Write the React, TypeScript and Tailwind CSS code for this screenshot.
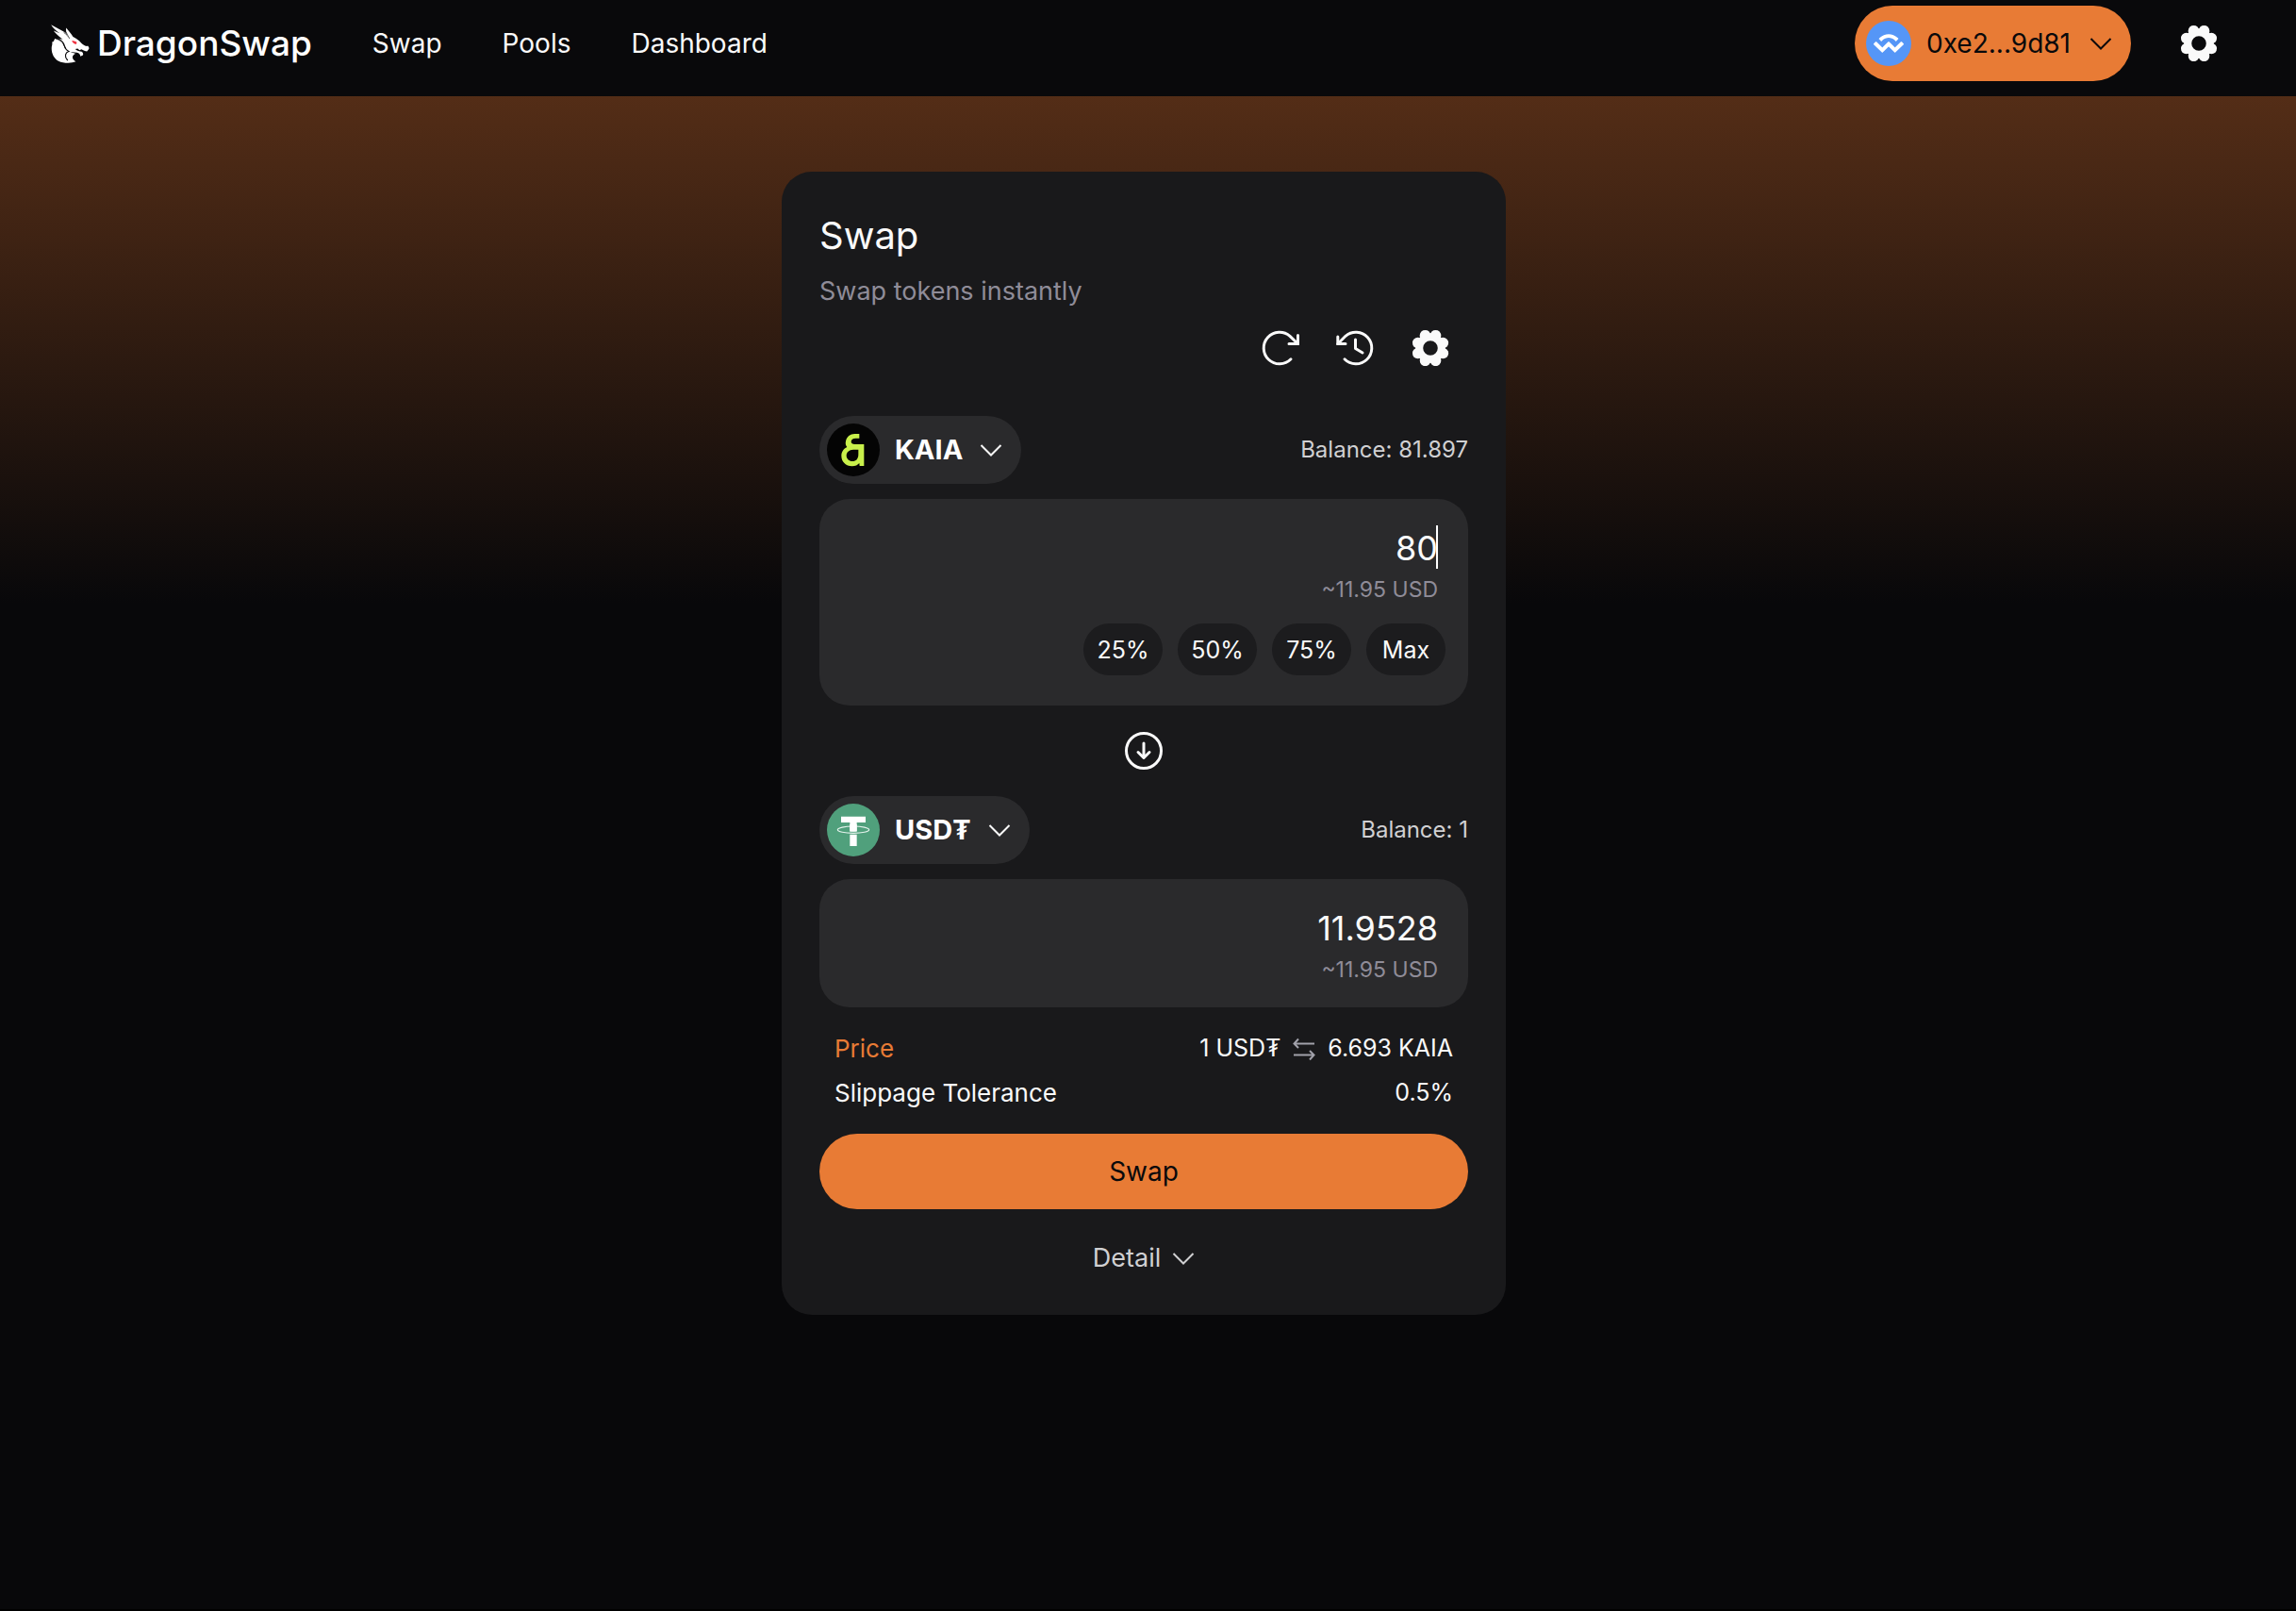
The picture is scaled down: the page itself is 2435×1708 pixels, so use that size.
import React, { useState } from "react";

function Chevron({ className }: { className: string }) {
  return (
    <svg viewBox="0 0 24 24" className={className} fill="none" stroke="currentColor" strokeWidth="2" aria-hidden="true">
      <path d="M1.5 7 L12 17.5 L22.5 7" />
    </svg>
  );
}

function DragonMark() {
  return (
    <svg viewBox="42 40 124 125" className="size-[41px]" aria-hidden="true">
      <g fill="#fff">
        <path d="M42 41 L80 61 C90 66 96 72 100 80 L91 64 C90 60 90 56 91 51 C98 60 106 68 113 80 C122 84 132 91 140 100 C146 106 152 109 159 110 C160 106 164 112 165 117 C163 121 161 124 158 127 C153 127 146 122 140 120 L134 123 L128 118 L120 119 C126 126 134 126 141 128 C145 131 147 135 145 139 L137 143 C136 136 132 132 126 131 C116 129 106 130 99 127 C92 123 88 114 84 104 C78 97 68 92 62 84 L80 88 C66 78 55 68 50 60 L70 68 C58 60 48 52 42 41Z" />
        <path d="M54 86 C66 90 78 96 82 106 C86 116 92 120 98 126 C112 131 116 132 122 134 C108 140 108 152 122 160 C108 166 82 166 66 158 C50 149 42 130 44 112 C45 108 47 103 45 96 C49 98 51 94 54 86Z" />
      </g>
      <path d="M62 84 C74 90 83 98 85 108 C87 117 92 123 99 127 C88 130 84 144 95 155" fill="none" stroke="#09090b" strokeWidth="3.5" strokeLinecap="round" />
      <path d="M84 66 C92 72 98 78 101 84" fill="none" stroke="#09090b" strokeWidth="2.5" strokeLinecap="round" />
      <path d="M109 93 C114 92 120 94 125 97 L124 103 C118 103 113 101 109 93Z" fill="#ef3340" />
    </svg>
  );
}

const LOBES = [22.5, 67.5, 112.5, 157.5, 202.5, 247.5, 292.5, 337.5];

function Gear() {
  return (
    <svg viewBox="0 0 48 48" className="size-12" aria-hidden="true">
      <circle cx="24" cy="24" r="11.8" fill="none" stroke="#fafafa" strokeWidth="8" />
      {LOBES.map((a) => (
        <circle key={a} cx="24" cy="9.6" r="5.8" fill="#fafafa" transform={`rotate(${a} 24 24)`} />
      ))}
    </svg>
  );
}

function RefreshGlyph() {
  return (
    <svg viewBox="0 0 48 48" className="size-12" fill="none" stroke="currentColor" strokeWidth="3" strokeLinecap="round" aria-hidden="true">
      <path d="M36 35.8 A16.8 16.8 0 1 1 35 11.3 L43.5 19.5" />
      <path d="M43.5 10.5 V19.5 H34" strokeLinejoin="miter" />
    </svg>
  );
}

function HistoryGlyph() {
  return (
    <svg viewBox="0 0 48 48" className="size-12" fill="none" stroke="currentColor" strokeWidth="3" strokeLinecap="round" aria-hidden="true">
      <path d="M13 35.8 A16.8 16.8 0 1 0 14 11.3 L5.8 19.5" />
      <path d="M5.8 12 V19.5 H14" strokeLinejoin="miter" />
      <path d="M24.5 15 V24.5 L32 29" strokeLinejoin="round" />
    </svg>
  );
}

function WalletMark() {
  return (
    <span className="flex size-12 items-center justify-center rounded-full bg-[#5596f7]">
      <svg viewBox="0 0 300 185" className="h-5 w-8" fill="#fff" aria-hidden="true">
        <path d="M61.439 36.256c48.91-47.888 128.212-47.888 177.123 0l5.886 5.764a6.041 6.041 0 0 1 0 8.67l-20.136 19.716a3.179 3.179 0 0 1-4.428 0l-8.101-7.931c-34.122-33.408-89.444-33.408-123.566 0l-8.675 8.494a3.179 3.179 0 0 1-4.428 0L54.978 51.253a6.041 6.041 0 0 1 0-8.67l6.46-6.327ZM280.206 77.03l17.922 17.547a6.041 6.041 0 0 1 0 8.67l-80.81 79.122c-2.446 2.394-6.41 2.394-8.856 0l-57.354-56.155a1.59 1.59 0 0 0-2.214 0L91.54 182.37c-2.446 2.394-6.411 2.394-8.857 0L1.872 103.247a6.041 6.041 0 0 1 0-8.671l17.922-17.547c2.445-2.394 6.41-2.394 8.856 0l57.355 56.155a1.59 1.59 0 0 0 2.214 0L145.57 77.03c2.446-2.394 6.41-2.395 8.856 0l57.355 56.155a1.59 1.59 0 0 0 2.214 0l57.355-56.154c2.445-2.394 6.41-2.394 8.856 0Z" />
      </svg>
    </span>
  );
}

function KaiaMark() {
  return (
    <svg viewBox="0 0 168 168" className="size-14" aria-hidden="true">
      <circle cx="84" cy="84" r="84" fill="#040404" />
      <path
        fill="#c8f04b"
        fillRule="evenodd"
        d="M46 103 C46 90 53 80 64 75 C60 70 58 64 60 56 C63 42 74 33 88 33 H103 V47 H92 C82 47 77 52 77 58 C77 64 82 66 88 66 H118 V135 H104 L103 126 C98 132 90 136 80 136 C60 136 46 122 46 103Z M100 83 H84 C70 83 62 92 62 102 C62 112 70 120 81 120 C93 120 100 112 100 98Z"
      />
    </svg>
  );
}

function TetherMark() {
  return (
    <svg viewBox="0 0 168 168" className="size-14" aria-hidden="true">
      <circle cx="84" cy="84" r="84" fill="#50a07c" />
      <path d="M45 41 H123 V60 H95 V135 H73 V60 H45Z" fill="#fff" />
      <path d="M34 83 A50 11 0 0 0 134 83" fill="none" stroke="#50a07c" strokeWidth="9" />
      <ellipse cx="84" cy="83" rx="50" ry="11" fill="none" stroke="#e4f2ec" strokeWidth="3.5" />
      <path d="M73 66 H95 V88 H73Z" fill="#fff" />
    </svg>
  );
}

function TokenRow({ icon, symbol, balance }: { icon: React.ReactNode; symbol: string; balance: string }) {
  return (
    <div className="flex items-center justify-between">
      <button type="button" className="flex h-[72px] items-center rounded-full bg-[#2a2a2c] pr-5 pl-2">
        {icon}
        <span className="ml-4 text-[29px] leading-10 font-bold text-white">{symbol}</span>
        <Chevron className="ml-[18px] size-6" />
      </button>
      <span className="text-[24px] leading-8 text-[#d0d0d2]">Balance: {balance}</span>
    </div>
  );
}

function AmountField({
  id,
  label,
  value,
  onChange,
  caret,
}: {
  id: string;
  label: string;
  value: string;
  onChange?: (v: string) => void;
  caret?: boolean;
}) {
  return (
    <div className="px-2">
      <div className="relative">
        <input
          id={id}
          aria-label={label}
          value={value}
          readOnly={!onChange}
          onChange={(e) => onChange?.(e.target.value)}
          className="block h-12 w-full bg-transparent text-right text-[36px] leading-[48px] text-[#fafafa] outline-none"
        />
        {caret && <span className="absolute top-0 right-0 h-[46px] w-0.5 bg-white" />}
      </div>
      <p className="mt-1 text-right text-[23px] leading-8 text-[#8f8c98]">~11.95 USD</p>
    </div>
  );
}

export default function App() {
  const [amount, setAmount] = useState("80");
  return (
    <div className="flex min-h-screen flex-col border-b-2 border-black bg-[#08080a] bg-[linear-gradient(to_bottom,#623419_0px,#08080a_640px)] font-['Inter',sans-serif] text-[#fafafa]">
      <header className="flex items-center justify-between bg-[#09090b] pt-1.5 pr-[79px] pb-4 pl-[54px]">
        <div className="flex items-center gap-16">
          <a href="#" className="flex items-center gap-2 text-[37px] leading-[48px] font-medium text-white">
            <DragonMark />
            DragonSwap
          </a>
          <nav className="flex items-center gap-16 text-[28px] leading-10">
            <a href="#swap">Swap</a>
            <a href="#pools">Pools</a>
            <a href="#dashboard">Dashboard</a>
          </nav>
        </div>
        <div className="flex items-center gap-12">
          <button type="button" className="flex h-20 items-center rounded-full bg-[#e87b35] pr-5 pl-3 text-[28px] leading-10 text-[#09090b]">
            <WalletMark />
            <span className="ml-4">0xe2...9d81</span>
            <Chevron className="ml-5 size-6" />
          </button>
          <button type="button" aria-label="Settings">
            <Gear />
          </button>
        </div>
      </header>

      <main className="flex justify-center pt-20 pr-[9px]">
        <section className="w-full max-w-[768px] rounded-[32px] bg-[#19191b] p-10">
          <h1 className="text-[40px] leading-[55px]">Swap</h1>
          <p className="mt-2 text-[27px] leading-12 text-[#8f8c98]">Swap tokens instantly</p>
          <div className="mt-3 flex justify-end gap-8 pr-4">
            <button type="button" aria-label="Refresh">
              <RefreshGlyph />
            </button>
            <button type="button" aria-label="History">
              <HistoryGlyph />
            </button>
            <button type="button" aria-label="Swap settings">
              <Gear />
            </button>
          </div>

          <div className="mt-12">
            <TokenRow icon={<KaiaMark />} symbol="KAIA" balance="81.897" />
          </div>
          <div className="mt-4 rounded-[32px] bg-[#2a2a2c] px-6 pt-7 pb-8">
            <AmountField id="pay" label="Amount to pay" value={amount} onChange={setAmount} caret />
            <div className="mt-5 flex justify-end gap-4">
              {["25%", "50%", "75%", "Max"].map((t) => (
                <button key={t} type="button" className="h-[55px] w-[84px] rounded-full bg-[#1c1c1e] text-[25px] leading-8">
                  {t}
                </button>
              ))}
            </div>
          </div>

          <div className="flex justify-center py-6">
            <button type="button" aria-label="Switch tokens">
              <svg viewBox="0 0 48 48" className="size-12" fill="none" stroke="currentColor" strokeWidth="3" strokeLinecap="round" strokeLinejoin="round" aria-hidden="true">
                <circle cx="24" cy="24" r="18.5" />
                <path d="M24 16 V31 M18 25.5 L24 31.5 L30 25.5" />
              </svg>
            </button>
          </div>

          <TokenRow icon={<TetherMark />} symbol="USD₮" balance="1" />
          <div className="mt-4 rounded-[32px] bg-[#2a2a2c] px-6 pt-7 pb-6">
            <AmountField id="receive" label="Amount to receive" value="11.9528" />
          </div>

          <dl className="mt-5 px-4 text-[26px] leading-[47px]">
            <div className="flex justify-between">
              <dt className="text-[#e87b35]">Price</dt>
              <dd className="flex items-center text-[25px]">
                1 USD₮
                <svg viewBox="0 0 26 26" className="mx-3 size-[26px]" fill="none" stroke="#a1a1aa" strokeWidth="2" aria-hidden="true">
                  <path d="M24 7.5 H2.5 M7 2.5 L2.5 7.5 L7 12" />
                  <path d="M2 19.5 H23.5 M19 15 L23.5 19.5 L19 24.5" />
                </svg>
                6.693 KAIA
              </dd>
            </div>
            <div className="flex justify-between">
              <dt>Slippage Tolerance</dt>
              <dd className="text-[25px]">0.5%</dd>
            </div>
          </dl>

          <button type="button" className="mt-5 h-20 w-full rounded-full bg-[#e87b35] text-[28px] leading-10 text-[#09090b]">
            Swap
          </button>
          <button type="button" className="mx-auto mt-8 flex h-10 items-center gap-3 text-[27px] leading-10 text-[#d0d0d2]">
            Detail
            <Chevron className="size-6" />
          </button>
        </section>
      </main>
    </div>
  );
}
